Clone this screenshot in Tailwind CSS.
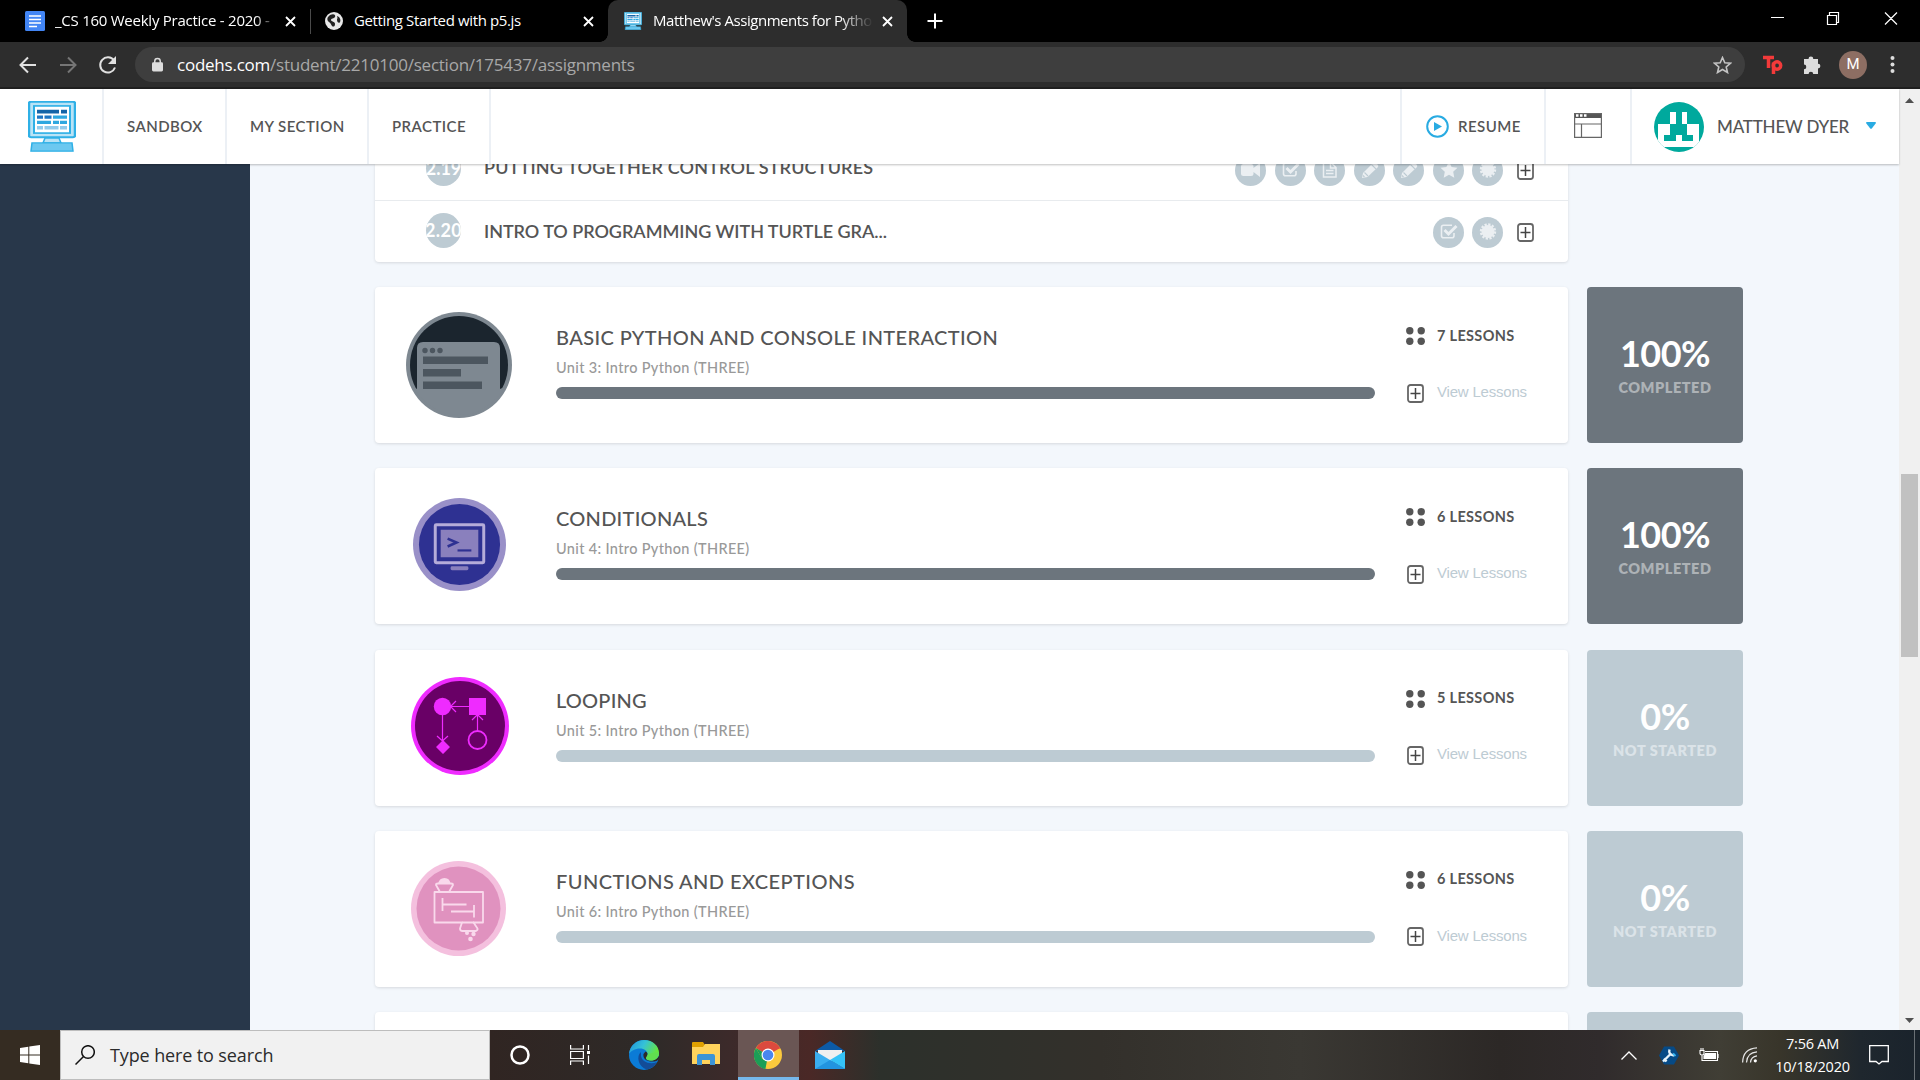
<!DOCTYPE html>
<html lang="en">
<head>
<meta charset="utf-8">
<title>Matthew's Assignments for Python</title>
<script src="https://cdn.jsdelivr.net/npm/@tailwindcss/browser@4"></script>
</head>
<body class="w-[1920px] h-[1080px] overflow-hidden bg-[#f3f7fc] font-['Lato',sans-serif] text-[#555]">
<svg class="hidden">
  <symbol id="plus" viewBox="0 0 17 19"><rect x="1" y="1" width="15" height="17" rx="2.5" fill="none" stroke="#666" stroke-width="1.8"/><path d="M8.5 4v11M3.5 9.5h10" stroke="#444" stroke-width="1.5"/></symbol>
  <symbol id="dots" viewBox="0 0 19 18"><g fill="#555"><circle cx="3.8" cy="3.7" r="3.7"/><circle cx="15.2" cy="3.7" r="3.7"/><circle cx="3.8" cy="14.3" r="3.7"/><circle cx="15.2" cy="14.3" r="3.7"/></g></symbol>
  <symbol id="disc" viewBox="0 0 31 31"><circle cx="15.5" cy="15.5" r="15.5" fill="#bdcbd3"/></symbol>
  <symbol id="i-video" viewBox="0 0 31 31"><use href="#disc"/><path d="M6 11.500q0-2.500 2.500-2.500h7.500q2.500 0 2.500 2.500v1.500l6.500-5v14l-6.500-5v1.500q0 2.500-2.500 2.500H8.500Q6 21 6 18.500z" fill="#ebeff2"/></symbol>
  <symbol id="i-check" viewBox="0 0 31 31"><use href="#disc"/><path d="M19 8.300h-8.500a2 2 0 0 0-2 2v8.400a2 2 0 0 0 2 2H19a2 2 0 0 0 2-2V16" fill="none" stroke="#ebeff2" stroke-width="1.600"/><path d="M11.500 13l4 4L23.500 9" fill="none" stroke="#ebeff2" stroke-width="3"/></symbol>
  <symbol id="i-doc" viewBox="0 0 31 31"><use href="#disc"/><path d="M9.500 7.500h7.500l5 5v9.500h-12.500zM16.500 7.500v5.500h5.500M12 15.500h7.500M12 18.500h7.500" fill="none" stroke="#ebeff2" stroke-width="1.500"/></symbol>
  <symbol id="i-pen" viewBox="0 0 31 31"><use href="#disc"/><path d="M8 23l1-5L19 8q1.500-1.500 3 0l1.500 1.500q1.500 1.500 0 3L13.500 22z" fill="#ebeff2"/><path d="M10.500 17.500l3.500 3.500M17.500 9.500l4.500 4.500M9 20.500l1.500 1.500" stroke="#bdcbd3" stroke-width="1.100"/></symbol>
  <symbol id="i-star" viewBox="0 0 31 31"><use href="#disc"/><path d="M16 6.500l2.600 5.400 5.900.8-4.300 4.100 1.100 5.900-5.300-2.900-5.300 2.900 1.100-5.900-4.300-4.100 5.900-.8z" fill="#ebeff2"/></symbol>
  <symbol id="i-badge" viewBox="0 0 31 31"><use href="#disc"/><circle cx="16" cy="14.500" r="6.500" fill="#ebeff2"/><circle cx="16" cy="14.500" r="7" fill="none" stroke="#ebeff2" stroke-width="2.400" stroke-dasharray="2.200 1.465"/></symbol>
  <symbol id="logo" viewBox="0 0 48 62" preserveAspectRatio="none"><rect x="1" y="1" width="46" height="43" rx="2" fill="#b9e3f6" stroke="#2fb0e6" stroke-width="2.500"/><rect x="6" y="6" width="36" height="33" fill="#fff" stroke="#2fb0e6" stroke-width="2"/><path d="M17 45h14l2 6H15z" fill="#b9e3f6" stroke="#2fb0e6" stroke-width="1.500"/><path d="M4 51h40l1 10H3z" fill="#6cc8f0" stroke="#2fb0e6" stroke-width="1.500"/><path d="M9 13h22M33 13h6" stroke="#1565a8" stroke-width="4.500"/><path d="M9 19.700h6M16.500 19.700h7" stroke="#1f76c4" stroke-width="4"/><path d="M25 19.700h14M9 26h14M25 26h6M32 26h7" stroke="#2fa8e0" stroke-width="4"/><path d="M9 32.500h6M16.500 32.500h14M32 32.500h7" stroke="#92cbec" stroke-width="4"/></symbol>
</svg>

<!-- Browser tabs -->
<div class="flex h-[42px] bg-black font-['Open_Sans',sans-serif] text-[15px] text-white">
  <div class="flex w-[310px] items-center pl-[25px]">
    <svg class="w-5 h-5" viewBox="0 0 20 20"><rect width="20" height="20" rx="1.500" fill="#4285f4"/><path d="M4 5h12M4 8.500h12M4 12h12M4 15.500h8" stroke="#fff" stroke-width="1.700"/></svg>
    <div class="ml-[10px] -mt-px w-[222px] overflow-hidden whitespace-nowrap tracking-[-0.25px] mask-r-from-90%">_CS 160 Weekly Practice - 2020 -</div>
    <svg class="ml-[8px] w-[11px] h-[11px]" viewBox="0 0 11 11"><path d="M1 1l9 9M10 1l-9 9" stroke="#fff" stroke-width="1.800"/></svg>
  </div>
  <div class="flex w-[298px] items-center">
    <div class="h-[25px] w-px bg-[#4a4a4a]"></div>
    <svg class="ml-[14px] w-[18px] h-[18px]" viewBox="0 0 18 18"><circle cx="9" cy="9" r="9" fill="#e8e8e8"/><path d="M5 3c4-2 6 0 5 2s-4 1-4 3 4 1 4 4-2 3-3 2-1-3-3-4-2-4-1-5zM12 4c3 1 4 4 3 6s-3 0-3-2 1-1 0-4z" fill="#222"/></svg>
    <div class="ml-[11px] -mt-px w-[219px] whitespace-nowrap tracking-[-0.37px]">Getting Started with p5.js</div>
    <svg class="ml-[10px] w-[11px] h-[11px]" viewBox="0 0 11 11"><path d="M1 1l9 9M10 1l-9 9" stroke="#fff" stroke-width="1.800"/></svg>
  </div>
  <div class="relative flex w-[299px] items-center rounded-t-[10px] bg-[#2d2d2d] pl-[16px]">
    <div class="absolute -left-[8px] bottom-0 w-2 h-2 bg-[radial-gradient(circle_at_0_0,#000_7.5px,#2d2d2d_8px)]"></div>
    <div class="absolute -right-[8px] bottom-0 w-2 h-2 bg-[radial-gradient(circle_at_100%_0,#000_7.5px,#2d2d2d_8px)]"></div>
    <svg class="w-[18px] h-[18px]"><use href="#logo"/></svg>
    <div class="ml-[11px] -mt-px w-[220px] overflow-hidden whitespace-nowrap tracking-[-0.46px] mask-r-from-85%">Matthew's Assignments for Pytho</div>
    <svg class="ml-[9px] w-[11px] h-[11px]" viewBox="0 0 11 11"><path d="M1 1l9 9M10 1l-9 9" stroke="#fff" stroke-width="1.800"/></svg>
  </div>
  <svg class="ml-[20px] mt-[13px] w-4 h-4" viewBox="0 0 16 16"><path d="M8 .5v15M.5 8h15" stroke="#fff" stroke-width="2"/></svg>
  <div class="ml-auto flex items-start">
    <svg class="mt-[11px] w-[150px] h-4" viewBox="0 0 150 16" fill="none" stroke="#fff" stroke-width="1.200"><path d="M1 6.500h13M57.500 4.500h9v9h-9zM59.500 4.500v-3h9v10h-2M115 1.500l12 12M127 1.500l-12 12"/></svg>
  </div>
</div>

<!-- Address bar -->
<div class="flex h-[47px] items-center border-b-2 border-[#1f1f1f] bg-[#2d2d2d] pl-[19px] font-['Open_Sans',sans-serif]">
  <svg class="w-[100px] h-[20px]" viewBox="0 0 100 20" fill="none" stroke-width="2"><path d="M17 10H1.500M9 2.500L1.500 10 9 17.500" stroke="#e0e0e0"/><path d="M41 10h15.500M49 2.500l7.500 7.500-7.500 7.500" stroke="#757575"/><path d="M95 5.500A7.600 7.600 0 1 0 96 12.500" stroke="#e0e0e0"/><path d="M97 1v8h-8z" fill="#e0e0e0"/></svg>
  <div class="ml-[16px] flex h-[35px] w-[1610px] items-center rounded-full bg-[#3e3e3e] pl-[17px] pr-[13px]">
    <svg class="w-[11px] h-[15px]" viewBox="0 0 12 15"><rect y="5" width="12" height="10" rx="1.500" fill="#ddd"/><path d="M3 6V4a3 3 0 0 1 6 0v2" fill="none" stroke="#ddd" stroke-width="1.600"/></svg>
    <div class="ml-[14px] whitespace-nowrap text-[17px] tracking-[-0.24px] text-[#a8a8a8]"><span class="text-white">codehs.com</span><span>/student/2210100/section/175437/assignments</span></div>
    <svg class="ml-auto w-[19px] h-[18px]" viewBox="0 0 19 18"><path d="M9.500 1.500l2.300 5.200 5.700.5-4.300 3.800 1.300 5.500-5-3-5 3 1.300-5.500L1.500 7.200l5.700-.5z" fill="none" stroke="#c4c4c4" stroke-width="1.600"/></svg>
  </div>
  <div class="ml-[18px] flex items-center">
    <svg class="w-[20px] h-[19px]" viewBox="0 0 20 19" fill="none" stroke="#f23a3a" stroke-width="3.500"><path d="M0 2.500h11M5.500 2v11M10.500 19V7.500"/><circle cx="14" cy="10.500" r="3.700"/></svg>
    <svg class="ml-[20px] w-[19px] h-[19px]" viewBox="0 0 19 19" fill="#dcdcdc"><path d="M1 4h4.500a2.400 2.400 0 1 1 4.800 0H15v4.700a2.400 2.400 0 1 1 0 4.800V19h-4.800a2.300 2.300 0 1 0-4.600 0H1v-4.800a2.300 2.300 0 1 0 0-4.600z"/></svg>
    <div class="ml-[17px] flex w-7 h-7 items-center justify-center rounded-full bg-[#8d6e63] font-['Roboto',sans-serif] text-[15px] text-white">M</div>
    <svg class="ml-[23px] w-[5px] h-[17px]" viewBox="0 0 5 17" fill="#ddd"><circle cx="2.500" cy="2" r="2"/><circle cx="2.500" cy="8.500" r="2"/><circle cx="2.500" cy="15" r="2"/></svg>
  </div>
</div>

<!-- Page viewport -->
<div class="flex h-[941px]">
  <div class="flex w-[1899px] flex-col">
    <nav class="relative z-10 flex h-[75px] shrink-0 items-stretch bg-white text-[15px] font-semibold tracking-[0.45px] shadow-[0_1px_2px_rgba(0,0,0,0.25)]">
      <div class="flex w-[104px] items-center border-r-2 border-[#ecf0f5] pl-[28px]"><svg class="w-[48px] h-[51px]"><use href="#logo"/></svg></div>
      <div class="flex w-[123px] items-center border-r-2 border-[#ecf0f5] pl-[23px]">SANDBOX</div>
      <div class="flex w-[142px] items-center border-r-2 border-[#ecf0f5] pl-[23px] whitespace-nowrap">MY SECTION</div>
      <div class="flex w-[122px] items-center border-r-2 border-[#ecf0f5] pl-[23px]">PRACTICE</div>
      <div class="ml-auto flex w-[144px] items-center border-l-2 border-[#ecf0f5] pl-[24px]">
        <svg class="w-[23px] h-[23px]" viewBox="0 0 23 23"><circle cx="11.500" cy="11.500" r="10.300" fill="none" stroke="#29abe2" stroke-width="2"/><path d="M8 7l8 4.500L8 16z" fill="#29abe2"/></svg>
        <span class="ml-[9px]">RESUME</span>
      </div>
      <div class="flex w-[86px] items-center border-l-2 border-[#ecf0f5] pl-[28px]">
        <svg class="w-[28px] h-[25px] -mt-[2px]" viewBox="0 0 28 25"><path d="M0 0h28v5H0z" fill="#555"/><path d="M.6.6h26.800v23.800H.6zM0 11h28M7.500 11v14" fill="none" stroke="#666" stroke-width="1.200"/><path d="M2 2.500h2.500M6 2.500h2.500M10 2.500h2.500" stroke="#fff" stroke-width="2.500"/></svg>
      </div>
      <div class="flex w-[269px] items-center border-l-2 border-[#ecf0f5] pl-[22px] text-[17px] font-medium tracking-[-0.2px]">
        <svg class="w-[50px] h-[50px]" viewBox="0 0 50 50"><clipPath id="av"><circle cx="25" cy="25" r="25"/></clipPath><g clip-path="url(#av)"><path fill="#00a99d" d="M0 0h50v50H0z"/><path fill="#fff" d="M16 10h6v12h-6zM28 10h5v12h-5zM4 22h12v11h-6v6h12v-6h6v6h11v-6h-6V22h12v23H4zM"/><path fill="#00a99d" d="M16 22h17v11H16zM10 33h6v6h-6zM33 33h6v6h-6z"/></g></svg>
        <span class="ml-[13px] w-[131px] whitespace-nowrap">MATTHEW DYER</span>
        <svg class="ml-[18px] -mt-[2px] w-[10px] h-[7px]" viewBox="0 0 10 7"><path d="M0 1q0-1 1-1h8q1 0 1 1L6 6.300q-1 1-2 0z" fill="#29abe2"/></svg>
      </div>
    </nav>
    <div class="flex h-[866px] overflow-hidden">
      <aside class="w-[250px] bg-[#28374a]"></aside>
      <main class="flex flex-1 flex-col pl-[125px]">
        <!-- Lesson rows of the open unit -->
        <section class="h-[98px] w-[1193px] shrink-0 overflow-hidden rounded-b-[4px] bg-white shadow-[0_1px_3px_rgba(0,0,0,0.12)]">
          <div class="-mt-[26px] flex h-[63px] items-center border-b border-[#e8ebee] pl-[51px] pr-[34px]">
            <div class="mt-[-2px] flex w-[35px] h-[35px] items-center justify-center overflow-hidden rounded-full bg-[#bdcbd3] text-[18px] font-bold text-white">2.19</div>
            <span class="-mt-[3px] ml-[23px] text-[18px] font-semibold tracking-[0.17px] whitespace-nowrap">PUTTING TOGETHER CONTROL STRUCTURES</span>
            <div class="ml-auto mt-[2px] flex items-center">
              <div class="flex gap-[8.5px]">
                <svg class="w-[31px] h-[31px]"><use href="#i-video"/></svg><svg class="w-[31px] h-[31px]"><use href="#i-check"/></svg><svg class="w-[31px] h-[31px]"><use href="#i-doc"/></svg><svg class="w-[31px] h-[31px]"><use href="#i-pen"/></svg><svg class="w-[31px] h-[31px]"><use href="#i-pen"/></svg><svg class="w-[31px] h-[31px]"><use href="#i-star"/></svg><svg class="w-[31px] h-[31px]"><use href="#i-badge"/></svg>
              </div>
              <svg class="ml-[14px] w-[17px] h-[19px]"><use href="#plus"/></svg>
            </div>
          </div>
          <div class="flex h-[61px] items-center pl-[51px] pr-[34px]">
            <div class="-mt-[2px] flex w-[35px] h-[35px] items-center justify-center overflow-hidden rounded-full bg-[#bdcbd3] text-[18px] font-bold tracking-[0.3px] text-white">2.20</div>
            <span class="-mt-[1px] ml-[23px] text-[18px] font-semibold tracking-[-0.04px] whitespace-nowrap">INTRO TO PROGRAMMING WITH TURTLE GRA...</span>
            <div class="ml-auto mt-[2px] flex items-center">
              <div class="flex gap-[8.5px]"><svg class="w-[31px] h-[31px]"><use href="#i-check"/></svg><svg class="w-[31px] h-[31px]"><use href="#i-badge"/></svg></div>
              <svg class="ml-[14px] w-[17px] h-[19px]"><use href="#plus"/></svg>
            </div>
          </div>
        </section>
        <div id="units" class="mt-[25px] flex flex-col gap-[25.25px]"></div>
      </main>
    </div>
  </div>
  <!-- Scrollbar -->
  <div class="flex w-[21px] flex-col items-center bg-[#f0f0f0]">
    <svg class="mt-[9px] w-[9px] h-[5px]" viewBox="0 0 9 5"><path d="M0 5L4.500 0 9 5z" fill="#505050"/></svg>
    <div class="mt-[371px] h-[183px] w-[17px] bg-[#c1c1c1]"></div>
    <svg class="mt-auto mb-[7px] w-[9px] h-[5px]" viewBox="0 0 9 5"><path d="M0 0L4.500 5 9 0z" fill="#505050"/></svg>
  </div>
</div>

<!-- Taskbar -->
<footer class="flex h-[50px] bg-[linear-gradient(90deg,#352c22_0,#352c22_60px,#302522_490px,#2e2a28_650px,#3c2a2a_730px,#4a2826_810px,#2c302b_880px,#33302b_1100px,#3a3833_1300px,#2c2826_1500px,#302b2c_1600px,#403e35_1720px,#38352a_1780px,#1f272e_1860px,#1a232c_1920px)] font-['Open_Sans',sans-serif] text-white">
  <div class="flex w-[60px] items-center justify-center"><svg class="w-5 h-5" viewBox="0 0 20 20" fill="#fff"><path d="M0 3l8.300-1.200v7.700H0zM9.300 1.600L20 0v9.500H9.300zM0 10.500h8.300v7.700L0 17zM9.300 10.500H20V20L9.300 18.400z"/></svg></div>
  <div class="flex w-[430px] items-center border border-[#bdbdbd] bg-[#f1f1f1] pl-[14px] text-[18px] text-[#2b2b2b]">
    <svg class="w-5 h-5" viewBox="0 0 20 20" fill="none" stroke="#111" stroke-width="1.500"><circle cx="13" cy="7" r="6.300"/><path d="M8.500 11.500L.5 19.500"/></svg>
    <span class="ml-[15px] whitespace-nowrap tracking-[-0.12px]">Type here to search</span>
  </div>
  <div class="flex w-[60px] items-center justify-center"><svg class="w-5 h-5" viewBox="0 0 20 20"><circle cx="10" cy="10" r="8.500" fill="none" stroke="#fff" stroke-width="2.500"/></svg></div>
  <div class="flex w-[60px] items-center justify-center"><svg class="w-5 h-5" viewBox="0 0 20 20" fill="none" stroke="#fff" stroke-width="1.200"><path d="M.6 0v4h12.800V0M.6 20v-4h12.800v4M.6 6.500h12.800v7H.6zM18.500 0v5M18.500 10.500V19"/><path d="M17 6h3v3h-3z" fill="#fff" stroke="none"/></svg></div>
  <div class="flex w-[66px] items-center justify-center pl-px">
    <svg class="w-[30px] h-[30px]" viewBox="0 0 30 30"><defs><linearGradient id="e1" x1="0" y1="0" x2="1" y2=".4"><stop offset="0" stop-color="#1c8fdc"/><stop offset=".5" stop-color="#35c1d8"/><stop offset="1" stop-color="#66e63c"/></linearGradient></defs><circle cx="15" cy="15" r="15" fill="#0b7bd6"/><path d="M0 14C1 5 8 0 15 0c9 0 15 6 15 13 0 5-4 7.500-8 7.500-3 0-5-1-5-2.500 0-1 1.500-1.500 1.500-4 0-3-3-5.500-7.500-5.500C6 8.500 1.500 11 0 14z" fill="url(#e1)"/><path d="M12 12c-5 4-3 15 6 17.500 4-.5 8-4 10-7.500-7 3-15 0-16-6z" fill="#134c98"/><path d="M14.500 14c-1 5 4 9 13 7l3-2v-4c-2 5-7 6.500-11 5.500-2-.5-3-2-2-3.500 2-2 1-5-1-5.500z" fill="#2e2a28"/><path d="M30 12c.5 5-3.500 8.500-8 8.500-3 0-5-1-5-2.500l2-4z" fill="#60dd50"/></svg>
  </div>
  <div class="flex w-[62px] items-center justify-center pr-[2px]">
    <svg class="w-[28px] h-[24px] -mt-[2px]" viewBox="0 0 28 24"><path d="M0 1q0-1 1-1h10l2 3v3H0z" fill="#e0a000"/><path d="M0 5h11l2-3h15v20H0z" fill="#ffd35c"/><path d="M5 23V14q0-2 2-2h14q2 0 2 2v9h-5v-5h-8v5z" fill="#3c94d6"/></svg>
  </div>
  <div class="flex w-[61px] items-center justify-center border-b-[3px] border-[#76b9ed] bg-[#6a5654] pr-px pt-[3px]">
    <svg class="w-[28px] h-[28px]" viewBox="0 0 28 28"><circle cx="14" cy="14" r="14" fill="#fbc93d"/><path d="M14 14L1.900 7A14 14 0 0 1 26.100 7z" fill="#db4a3e"/><path d="M1.900 7L8 17.500l6 3L11.500 28A14 14 0 0 1 1.900 7z" fill="#1b9e57"/><path d="M11.500 27.800L20 17l-6-3z" fill="#fbc93d"/><path d="M1.900 7l6 10.500L14 14z" fill="#1b9e57"/><path d="M3 5.500A14 14 0 0 1 26 7.500H14z" fill="#db4a3e"/><circle cx="14" cy="14" r="6.500" fill="#fff"/><circle cx="14" cy="14" r="5.300" fill="#4a86ee"/></svg>
  </div>
  <div class="flex w-[62px] items-center justify-center">
    <svg class="w-[30px] h-[28px]" viewBox="0 0 30 28"><path d="M0 10L15 0l15 10z" fill="#0c5aa6"/><path d="M3 9h24v8l-12 4-12-4z" fill="#f0f0f0"/><path d="M0 10l30 18H0z" fill="#3aaef0"/><path d="M30 10v18L15 19z" fill="#35c3f8"/><path d="M0 28L15 19l15 9z" fill="#2294e0"/></svg>
  </div>
  <div class="ml-auto flex items-center">
    <svg class="w-4 h-[9px]" viewBox="0 0 16 9"><path d="M.5 8.500L8 1l7.500 7.500" fill="none" stroke="#fff" stroke-width="1.300"/></svg>
    <svg class="ml-[22px] w-5 h-[19px]" viewBox="0 0 20 19"><path d="M5 .5h10l5 9-5 9H5l-5-9z" fill="#064a86"/><path d="M4 15.500l7.500-7.500M5 12.500l2.500 3M10.500 3.500q-1.500 5 4.500 6" stroke="#e6f2fa" stroke-width="2.400" fill="none"/><path d="M14 7.500l2.500 2.500" stroke="#3ab5f0" stroke-width="2"/></svg>
    <svg class="ml-[20px] w-5 h-[14px]" viewBox="0 0 20 14" fill="none" stroke="#fff" stroke-width="1.100"><path d="M1 2.500h4v3q0 1.500-2 1.500T1 5.500zM2 0v2M4 0v2M3 7v5.500h15.500v-9H6M20 6v4"/><path d="M6.500 5.500h10v5H5V8z" fill="#fff"/></svg>
    <svg class="ml-[23px] w-4 h-4" viewBox="0 0 16 16" fill="none" stroke="#e8e8e8" stroke-width="1.200"><path d="M.6 15.500Q1 1.500 15 .8M4.500 15.500Q5 5.500 15 4.800M8.500 15.500Q9 9.500 15 8.800"/><circle cx="13.300" cy="13.800" r="1.600" fill="#fff" stroke="none"/></svg>
    <div class="ml-4 flex w-[77px] flex-col items-center text-[14.5px] leading-[23px] tracking-[-0.25px] whitespace-nowrap"><span>7:56 AM</span><span>10/18/2020</span></div>
    <svg class="ml-[18px] w-5 h-5" viewBox="0 0 20 20"><path d="M.7.700h18.600v15.800h-6.300L10 19l-3-2.500H.7z" fill="none" stroke="#fff" stroke-width="1.300"/></svg>
    <div class="ml-[25px] mr-[5px] h-[50px] w-px bg-[#6a7075]"></div>
  </div>
</footer>

<template id="icon-console"><svg class="w-[106px] h-[106px]" viewBox="0 0 106 106"><clipPath id="cc"><circle cx="53" cy="53" r="50"/></clipPath><circle cx="53" cy="53" r="53" fill="#7e8891"/><circle cx="53" cy="53" r="49" fill="#1b252e"/><path clip-path="url(#cc)" d="M11 77V36q0-6 6-6h71q6 0 6 6v41l9-4v33H3V73z" fill="#7e8891"/><g fill="#4c565f"><circle cx="19" cy="38.500" r="2.700"/><circle cx="26.500" cy="38.500" r="2.700"/><circle cx="34" cy="38.500" r="2.700"/><path d="M17 44.500h65V52H17zM17 57h38v7.500H17zM17 69.500h59V77H17z"/></g></svg></template>
<template id="icon-terminal"><svg class="-mt-[3px] ml-px w-[93px] h-[93px]" viewBox="0 0 94 94"><circle cx="47" cy="47" r="47" fill="#9990c8"/><circle cx="47" cy="47" r="41" fill="#2e3192"/><rect x="22.500" y="27" width="49" height="38.500" rx="1" fill="none" stroke="#b5acd9" stroke-width="3"/><path d="M28 32h38v28H28z" fill="#8a80bd"/><path d="M35 41l9 4-9 4" fill="none" stroke="#2e3192" stroke-width="2.600"/><path d="M45 53h14" stroke="#2e3192" stroke-width="2.200"/><rect x="38" y="69" width="18" height="4" rx="1.500" fill="#8a80bd"/></svg></template>
<template id="icon-loop"><svg class="-mt-[3px] ml-[2px] w-[98px] h-[98px]" viewBox="0 0 98 98"><circle cx="49" cy="49" r="49" fill="#ef2bff"/><circle cx="49" cy="49" r="45" fill="#690066"/><g fill="#ef2bff"><circle cx="31.500" cy="29.500" r="8.700"/><path d="M58 21h17v17H58zM32 63l7 7-7 7-7-7z"/></g><g fill="none" stroke="#ef2bff"><path d="M31.500 37v27M26 59l5.500 5 5.500-5M58 29.500H40M45 24l-5.500 5.500L45 35M66.500 54V38M61 43l5.500-5.500L72 43" stroke-width="1.200"/><circle cx="66.500" cy="63" r="9" stroke-width="1.800"/></g></svg></template>
<template id="icon-function"><svg class="-mt-px mr-px w-[95px] h-[95px]" viewBox="0 0 95 95"><circle cx="47.500" cy="47.500" r="47.500" fill="#f4c0de"/><circle cx="47.500" cy="47.500" r="42" fill="#e092bf"/><path d="M27 23q1-6 6.500-6t6 6z" fill="#f9d9ec"/><g fill="none" stroke="#f9d9ec" stroke-width="1.800" stroke-linejoin="round"><path d="M29 31H23.500v30.500H51l-2 6q0 2.500 2.500 2.500h13.500q2-1 1.500-2.500l-4-6h9.500V31H38l4-7q0-1.500-2-1.500H27q-2 0-2 1.500z"/><path d="M29 31h9M51 61.500h12M31.500 37v13M31.500 43.500h24M40 50.500h23M63 44v12.500"/></g><g fill="#f9d9ec"><circle cx="56" cy="72" r="2"/><circle cx="62.500" cy="73" r="2.200"/><circle cx="59.500" cy="78" r="2.300"/></g></svg></template>

<script>
const units = [
  {icon: 'icon-console', title: 'BASIC PYTHON AND CONSOLE INTERACTION', n: 3, lessons: 7, pct: 100, tracking: 'tracking-[0.38px]'},
  {icon: 'icon-terminal', title: 'CONDITIONALS', n: 4, lessons: 6, pct: 100, tracking: 'tracking-[0.25px]'},
  {icon: 'icon-loop', title: 'LOOPING', n: 5, lessons: 5, pct: 0, tracking: 'tracking-[0.2px]'},
  {icon: 'icon-function', title: 'FUNCTIONS AND EXCEPTIONS', n: 6, lessons: 6, pct: 0, tracking: 'tracking-[0.42px]'},
];
const row = (left, right) => `
<div class="flex h-[156px] shrink-0 gap-[19px]">
  <section class="flex w-[1193px] rounded-[4px] bg-white shadow-[0_1px_3px_rgba(0,0,0,0.12)]">${left}</section>
  ${right}
</div>`;
document.getElementById('units').innerHTML = units.map(u => row(`
    <div class="flex w-[168px] items-center justify-center">${document.getElementById(u.icon).innerHTML}</div>
    <div class="ml-[13px] w-[819px] pt-[37px]">
      <h2 class="text-[20px] leading-[26px] font-medium whitespace-nowrap ${u.tracking}">${u.title}</h2>
      <p class="mt-[8px] text-[14.5px] leading-[20px] font-medium tracking-[0.34px] text-[#999] whitespace-nowrap">Unit ${u.n}: Intro Python (THREE)</p>
      <div class="mt-[9px] h-[12px] overflow-hidden rounded-full bg-[#bdcbd3]"><div class="h-full bg-[#6c757d]" style="width:${u.pct}%"></div></div>
    </div>
    <div class="ml-[31px] pt-[39px]">
      <div class="flex h-[20px] items-center"><svg class="w-[19px] h-[18px]"><use href="#dots"/></svg><span class="ml-[12px] -mt-px text-[14.5px] font-bold tracking-[0.32px] whitespace-nowrap">${u.lessons} LESSONS</span></div>
      <div class="mt-[37px] flex h-[20px] items-center"><svg class="ml-px w-[17px] h-[19px]"><use href="#plus"/></svg><span class="ml-[13px] -mt-[2px] font-['Liberation_Sans',sans-serif] text-[15px] tracking-[-0.2px] text-[#bdcbd3] whitespace-nowrap">View Lessons</span></div>
    </div>`, `
  <div class="flex w-[156px] flex-col items-center rounded-[4px] pt-[43px] text-white ${u.pct ? 'bg-[#6c757d]' : 'bg-[#bdcbd3]'}">
    <span class="text-[36px] leading-[46px] font-bold tracking-[-0.5px]">${u.pct}%</span>
    <span class="mt-[2px] text-[14.5px] leading-[20px] font-extrabold tracking-[0.52px] whitespace-nowrap ${u.pct ? 'text-[#adb2b6]' : 'text-[#dbe3e8]'}">${u.pct ? 'COMPLETED' : 'NOT STARTED'}</span>
  </div>`)).join('') + row('', '<div class="w-[156px] rounded-[4px] bg-[#bdcbd3]"></div>');
</script>
</body>
</html>
